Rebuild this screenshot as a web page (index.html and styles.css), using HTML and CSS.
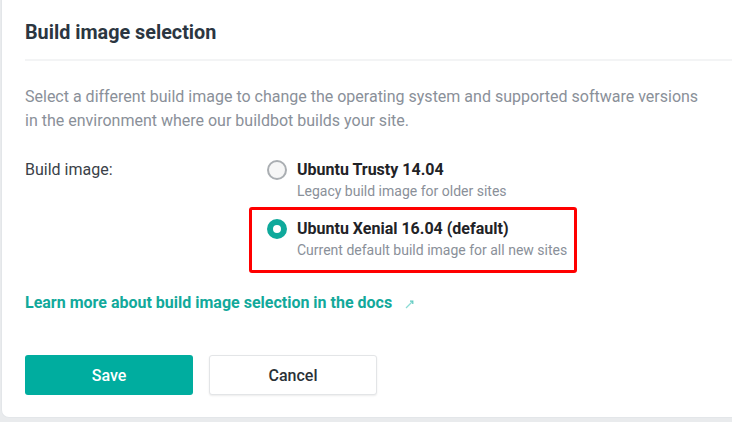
FILE: index.html
```html
<!DOCTYPE html>
<html lang="en">
<head>
<meta charset="utf-8">
<title>Build image selection</title>
<link rel="stylesheet" href="styles.css">
</head>
<body>
<div class="card">
  <header class="card-header">
    <h2 class="card-title">Build image selection</h2>
  </header>
  <div class="card-body">
    <p class="intro">Select a different build image to change the operating system and supported software versions in the environment where our buildbot builds your site.</p>
    <div class="field">
      <div class="field-label">Build image:</div>
      <div class="options">
        <label class="option">
          <span class="radio"></span>
          <span class="option-text">
            <span class="option-title">Ubuntu Trusty 14.04</span>
            <span class="option-desc">Legacy build image for older sites</span>
          </span>
        </label>
        <label class="option option-selected highlighted">
          <span class="radio radio-checked"></span>
          <span class="option-text">
            <span class="option-title">Ubuntu Xenial 16.04 (default)</span>
            <span class="option-desc">Current default build image for all new sites</span>
          </span>
        </label>
      </div>
    </div>
    <a class="docs-link" href="#">Learn more about build image selection in the docs
      <svg class="ext-icon" width="9" height="9" viewBox="0 0 9 9" aria-hidden="true"><path d="M1 8L7.5 1.5" stroke="#8adbd4" stroke-width="1.2" fill="none"/><path d="M5 1.2H7.8V4" stroke="#5cc9bf" stroke-width="1.2" fill="none"/></svg>
    </a>
    <div class="actions">
      <button class="btn btn-primary" type="button">Save</button>
      <button class="btn btn-secondary" type="button">Cancel</button>
    </div>
  </div>
</div>
</body>
</html>
```

FILE: styles.css
```css
html, body {
  margin: 0;
  padding: 0;
}
body {
  background: #e9ebed;
  font-family: Roboto, "Noto Sans", Arial, sans-serif;
  width: 732px;
  height: 422px;
  overflow: hidden;
}
.card {
  margin-left: 1px;
  width: 760px;
  height: 418px;
  background: #fff;
  border: 1px solid #e3e6e9;
  border-top: none;
  border-radius: 0 0 8px 8px;
  box-sizing: border-box;
}
.card-header {
  padding: 21px 0 0 23px;
}
.card-title {
  margin: 0;
  height: 38px;
  border-bottom: 2px solid #f3f4f5;
  font-size: 19.8px;
  line-height: 24px;
  font-weight: 700;
  color: #2b3641;
}
.card-body {
  padding: 24px 0 0 23px;
}
.intro {
  margin: 0;
  width: 685px;
  font-size: 16px;
  line-height: 24px;
  color: #8a9099;
}
.field {
  display: grid;
  grid-template-columns: 242px auto;
  margin-top: 27px;
}
.field-label {
  font-size: 16px;
  line-height: 20px;
  color: #3a4148;
}
.options {
  display: flex;
  flex-direction: column;
  gap: 20px;
}
.option {
  display: flex;
  gap: 10px;
  align-items: flex-start;
  width: max-content;
}
.highlighted {
  position: relative;
}
.highlighted::after {
  content: "";
  position: absolute;
  top: -12px;
  bottom: -15px;
  left: -18px;
  right: -10px;
  border: 3px solid #ff0000;
  border-radius: 3px;
}
.radio {
  width: 20px;
  height: 20px;
  box-sizing: border-box;
  border: 2px solid #aaaeb2;
  border-radius: 50%;
  background: #f6f6f6;
  flex: none;
}
.radio-checked {
  border: 6px solid #0fa99b;
  background: #fff;
}
.option-text {
  display: flex;
  flex-direction: column;
}
.option-title {
  font-size: 16px;
  line-height: 20px;
  font-weight: 700;
  color: #1f2327;
}
.option-desc {
  margin-top: 3px;
  font-size: 14px;
  line-height: 16px;
  color: #8a9099;
}
.docs-link {
  display: inline-flex;
  align-items: center;
  gap: 13px;
  margin-top: 35px;
  font-size: 16px;
  line-height: 20px;
  font-weight: 700;
  color: #12a99b;
  text-decoration: none;
}
.ext-icon {
  margin-top: 2px;
}
.actions {
  display: flex;
  gap: 16px;
  margin-top: 42px;
}
.btn {
  width: 168px;
  height: 40px;
  border-radius: 3px;
  font-family: Roboto, "Noto Sans", Arial, sans-serif;
  font-size: 16px;
  font-weight: 500;
  cursor: pointer;
}
.btn-primary {
  background: #00ad9f;
  border: none;
  color: #fff;
}
.btn-secondary {
  background: #fff;
  border: 1px solid #e3e5e7;
  box-shadow: 0 1px 2px rgba(0,0,0,0.08);
  color: #2b3137;
}
```
